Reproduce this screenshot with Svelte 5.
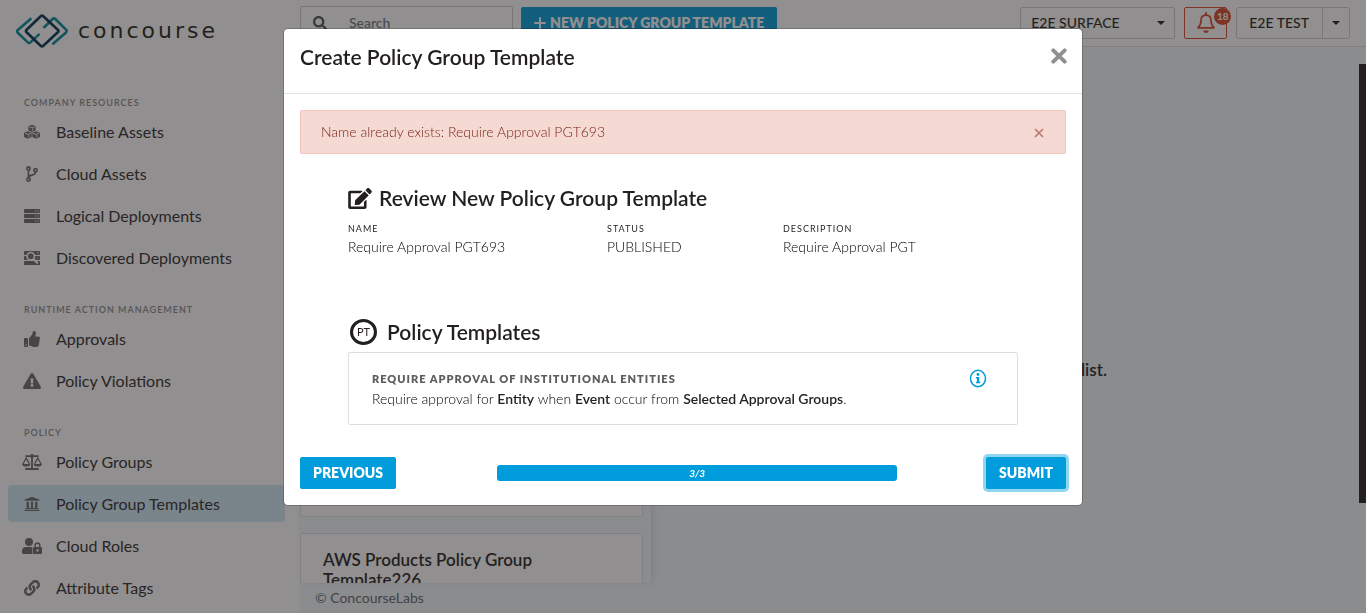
<script>
  const groups = [
    {
      title: 'Company Resources',
      items: [
        { label: 'Baseline Assets', icon: 'cubes' },
        { label: 'Cloud Assets', icon: 'branch' },
        { label: 'Logical Deployments', icon: 'server' },
        { label: 'Discovered Deployments', icon: 'discover' }
      ]
    },
    {
      title: 'Runtime Action Management',
      items: [
        { label: 'Approvals', icon: 'thumb' },
        { label: 'Policy Violations', icon: 'warning' }
      ]
    },
    {
      title: 'Policy',
      items: [
        { label: 'Policy Groups', icon: 'scale' },
        { label: 'Policy Group Templates', icon: 'bank', active: true },
        { label: 'Cloud Roles', icon: 'userlock' },
        { label: 'Attribute Tags', icon: 'link' }
      ]
    }
  ];

  const facts = [
    { name: 'Name', value: 'Require Approval PGT693' },
    { name: 'Status', value: 'PUBLISHED' },
    { name: 'Description', value: 'Require Approval PGT' }
  ];
</script>

{#snippet icon(name)}
  {#if name === 'cubes'}
    <svg class="icon" viewBox="0 0 16 16" aria-hidden="true">
      <g fill="currentColor">
        <path d="M8 .8 11.6 2.2V6.4L8 8 4.4 6.4V2.2Z" />
        <path d="M4 7.2 7.7 8.7V13L4 14.8 0 13V8.7Z" />
        <path d="M12 7.2 16 8.7V13L12 14.8 8.3 13V8.7Z" />
      </g>
      <g class="cut" fill="none" stroke-width="0.9">
        <path d="M5.2 2.7 8 3.8 10.8 2.7M8.8 4.4V6.8M1 9.3 4 10.4 7 9.3M4.8 11V13.5M9 9.3 12 10.4 15 9.3M12.8 11V13.5" />
      </g>
    </svg>
  {:else if name === 'branch'}
    <svg class="icon" viewBox="0 0 16 16" aria-hidden="true">
      <g fill="none" stroke="currentColor" stroke-width="1.7">
        <circle cx="4.5" cy="2.5" r="1.6" />
        <circle cx="4.5" cy="13.5" r="1.6" />
        <circle cx="11.5" cy="4.2" r="1.6" />
        <path d="M4.5 4.2V11.8M11.5 6C11.5 10.4 4.8 8 4.6 11.6" />
      </g>
    </svg>
  {:else if name === 'server'}
    <svg class="icon" viewBox="0 0 16 16" aria-hidden="true">
      <path fill="currentColor" fill-rule="evenodd" d="M.8 1H15.2Q16 1 16 1.8V4.2Q16 5 15.2 5H.8Q0 5 0 4.2V1.8Q0 1 .8 1ZM.8 6H15.2Q16 6 16 6.8V9.2Q16 10 15.2 10H.8Q0 10 0 9.2V6.8Q0 6 .8 6ZM.8 11H15.2Q16 11 16 11.8V14.2Q16 15 15.2 15H.8Q0 15 0 14.2V11.8Q0 11 .8 11ZM11 2.4V3.6H12.2V2.4ZM13.4 2.4V3.6H14.6V2.4ZM11 7.4V8.6H12.2V7.4ZM13.4 7.4V8.6H14.6V7.4ZM11 12.4V13.6H12.2V12.4ZM13.4 12.4V13.6H14.6V12.4Z" />
    </svg>
  {:else if name === 'discover'}
    <svg class="icon" viewBox="0 0 16 16" aria-hidden="true">
      <path fill="currentColor" fill-rule="evenodd" d="M.8 1H15.2Q16 1 16 1.8V4.2Q16 5 15.2 5H.8Q0 5 0 4.2V1.8Q0 1 .8 1ZM.8 6H15.2Q16 6 16 6.8V9.2Q16 10 15.2 10H.8Q0 10 0 9.2V6.8Q0 6 .8 6ZM.8 11H15.2Q16 11 16 11.8V14.2Q16 15 15.2 15H.8Q0 15 0 14.2V11.8Q0 11 .8 11ZM13.2 2.4V3.6H14.4V2.4ZM13.2 7.4V8.6H14.4V7.4Z" />
      <circle class="cut" cx="6.8" cy="6.2" r="3.7" fill="currentColor" stroke-width="1.7" />
      <path class="cut" d="M9.8 9.4 13.2 12.8" stroke-width="2.2" stroke-linecap="round" />
    </svg>
  {:else if name === 'thumb'}
    <svg class="icon" viewBox="0 0 512 512" aria-hidden="true">
      <path fill="currentColor" d="M104 224H24c-13.255 0-24 10.745-24 24v240c0 13.255 10.745 24 24 24h80c13.255 0 24-10.745 24-24V248c0-13.255-10.745-24-24-24zM64 472c-13.255 0-24-10.745-24-24s10.745-24 24-24 24 10.745 24 24-10.745 24-24 24zM384 81.452c0 42.416-25.97 66.208-33.277 94.548h101.723c33.397 0 59.397 27.746 59.553 58.098.084 17.938-7.546 37.249-19.439 49.197l-.11.11c9.836 23.337 8.237 56.037-9.308 79.469 8.681 25.895-.069 57.704-16.382 74.757 4.298 17.598 2.244 32.575-6.148 44.632C440.202 511.587 389.616 512 346.839 512l-2.845-.001c-48.287-.017-87.806-17.598-119.56-31.725-15.957-7.099-36.821-15.887-52.651-16.178-6.54-.12-11.783-5.457-11.783-11.998v-213.77c0-3.2 1.282-6.271 3.558-8.521 39.614-39.144 56.648-80.587 89.117-113.111 14.804-14.832 20.188-37.236 25.393-58.902C282.515 39.293 291.817 0 312 0c24 0 72 8 72 81.452z" />
    </svg>
  {:else if name === 'warning'}
    <svg class="icon wide" viewBox="0 0 576 512" aria-hidden="true">
      <path fill="currentColor" d="M569.517 440.013C587.975 472.007 564.806 512 527.94 512H48.054c-36.937 0-59.999-40.055-41.577-71.987L246.423 23.985c18.467-32.009 64.72-31.951 83.154 0l239.94 416.028zM288 354c-25.405 0-46 20.595-46 46s20.595 46 46 46 46-20.595 46-46-20.595-46-46-46zm-43.673-165.346l7.418 136c.347 6.364 5.609 11.346 11.982 11.346h48.546c6.373 0 11.635-4.982 11.982-11.346l7.418-136c.375-6.874-5.098-12.654-11.982-12.654h-63.383c-6.884 0-12.356 5.78-11.981 12.654z" />
    </svg>
  {:else if name === 'scale'}
    <svg class="icon wide" viewBox="0 0 20 16" aria-hidden="true">
      <g fill="none" stroke="currentColor">
        <path d="M10 1.2V15M3.4 2.1H16.6M3.2 15H16.8" stroke-width="1.8" />
        <path d="M.9 10 4.2 4 7.5 10M12.5 10 15.8 4 19.1 10" stroke-width="1.3" />
      </g>
      <circle cx="10" cy="2" r="1.9" fill="currentColor" />
      <path d="M0 10H8.4Q7.8 12.6 4.2 12.6T0 10ZM11.6 10H20Q19.4 12.6 15.8 12.6T11.6 10Z" fill="currentColor" />
    </svg>
  {:else if name === 'bank'}
    <svg class="icon" viewBox="0 0 16 16" aria-hidden="true">
      <path fill="currentColor" d="M8 .8 15.4 3.6V4.8H.6V3.6ZM2.6 5.8H4.9V12H2.6ZM6.9 5.8H9.1V12H6.9ZM11.1 5.8H13.4V12H11.1ZM1.6 12H14.4V13.1H1.6ZM.6 13.8H15.4V15.1H.6Z" />
    </svg>
  {:else if name === 'userlock'}
    <svg class="icon wide" viewBox="0 0 20 16" aria-hidden="true">
      <circle cx="7" cy="4" r="4" fill="currentColor" />
      <path fill="currentColor" d="M0 14.5V13Q0 9 4 9H9Q10 9 10.4 9.2V16H1.5Q0 16 0 14.5Z" />
      <path fill="currentColor" fill-rule="evenodd" d="M12 9H19Q20 9 20 10V15Q20 16 19 16H12Q11 16 11 15V10Q11 9 12 9ZM15.5 11.3A1.2 1.2 0 1 0 15.5 13.7 1.2 1.2 0 1 0 15.5 11.3Z" />
      <path d="M13.2 9.5V7.2Q13.2 4.9 15.5 4.9T17.8 7.2V9.5" fill="none" stroke="currentColor" stroke-width="1.5" />
    </svg>
  {:else if name === 'link'}
    <svg class="icon" viewBox="0 0 512 512" aria-hidden="true">
      <path fill="currentColor" d="M326.612 185.391c59.747 59.809 58.927 155.698.36 214.59-.11.12-.24.25-.36.37l-67.2 67.2c-59.27 59.27-155.699 59.262-214.96 0-59.27-59.26-59.27-155.7 0-214.96l37.106-37.106c9.84-9.84 26.786-3.3 27.294 10.606.648 17.722 3.826 35.527 9.69 52.721 1.986 5.822.567 12.262-3.783 16.612l-13.087 13.087c-28.026 28.026-28.905 73.66-1.155 101.96 28.024 28.579 74.086 28.749 102.325.51l67.2-67.19c28.191-28.191 28.073-73.757 0-101.83-3.701-3.694-7.429-6.564-10.341-8.569a16.037 16.037 0 0 1-6.947-12.606c-.396-10.567 3.348-21.456 11.698-29.806l21.054-21.055c5.521-5.521 14.182-6.199 20.584-1.731a152.482 152.482 0 0 1 20.522 17.196zM467.547 44.449c-59.261-59.262-155.69-59.27-214.96 0l-67.2 67.2c-.12.12-.25.25-.36.37-58.566 58.892-59.387 154.781.36 214.59a152.454 152.454 0 0 0 20.521 17.196c6.402 4.468 15.064 3.789 20.584-1.731l21.054-21.055c8.35-8.35 12.094-19.239 11.698-29.806a16.037 16.037 0 0 0-6.947-12.606c-2.912-2.005-6.64-4.875-10.341-8.569-28.073-28.073-28.191-73.639 0-101.83l67.2-67.19c28.239-28.239 74.3-28.069 102.325.51 27.75 28.3 26.872 73.934-1.155 101.96l-13.087 13.087c-4.35 4.35-5.769 10.79-3.783 16.612 5.864 17.194 9.042 34.999 9.69 52.721.509 13.906 17.454 20.446 27.294 10.606l37.106-37.106c59.271-59.259 59.271-155.699.001-214.959z" />
    </svg>
  {/if}
{/snippet}

<div class="app">
  <aside class="sidebar">
    <a class="brand" href="#home">
      <svg class="mark" viewBox="0 0 52 34" aria-hidden="true">
        <g fill="none" stroke-width="2.6" stroke-linecap="round" stroke-linejoin="round">
          <path stroke="#008b9b" d="M14.5 5 1.8 16Q.2 17.3 1.8 18.8L11.8 28.4Q13.1 29.6 14.4 28.4L22.8 20.6" />
          <path stroke="#008b9b" d="M28.2 13.2 36.6 5Q38 3.8 39.3 5L50 15.6Q51.2 17 50 18.4L37.3 29.6" />
          <path stroke="#003057" d="M24.7 2.2Q26 1 27.3 2.2L41.8 15.7Q43.2 17 41.8 18.3L27.3 31.8Q26 33 24.7 31.8L10.6 18.3Q9.2 17 10.6 15.7Z" />
        </g>
      </svg>
      <span>concourse</span>
    </a>
    <nav>
      {#each groups as group}
        <section>
          <h2>{group.title}</h2>
          <ul>
            {#each group.items as item}
              <li>
                <a href="#nav" class:active={item.active}>
                  <span class="slot">{@render icon(item.icon)}</span>{item.label}
                </a>
              </li>
            {/each}
          </ul>
        </section>
      {/each}
    </nav>
  </aside>

  <div class="page">
    <header class="topbar">
      <div class="search">
        <svg viewBox="0 0 512 512" aria-hidden="true">
          <path fill="currentColor" d="M505 442.7L405.3 343c-4.5-4.5-10.6-7-17-7H372c27.6-35.3 44-79.7 44-128C416 93.1 322.9 0 208 0S0 93.1 0 208s93.1 208 208 208c48.3 0 92.7-16.4 128-44v16.3c0 6.4 2.5 12.5 7 17l99.7 99.7c9.4 9.4 24.6 9.4 33.9 0l28.3-28.3c9.4-9.4 9.4-24.6.1-34zM208 336c-70.7 0-128-57.2-128-128 0-70.7 57.2-128 128-128 70.7 0 128 57.2 128 128 0 70.7-57.2 128-128 128z" />
        </svg>
        <input type="search" placeholder="Search" aria-label="Search" />
      </div>
      <button class="primary create" type="button">
        <svg viewBox="0 0 12 12" aria-hidden="true">
          <path d="M6 1V11M1 6H11" stroke="currentColor" stroke-width="2" stroke-linecap="round" />
        </svg>
        NEW POLICY GROUP TEMPLATE
      </button>
      <div class="account">
        <div class="surface">
          <select aria-label="Surface"><option>E2E SURFACE</option></select>
          <i class="caret"></i>
        </div>
        <button class="bell" type="button" aria-label="Notifications">
          <svg viewBox="0 0 20 22" aria-hidden="true">
            <path d="M10 3.2C6.6 3.2 5 5.8 5 8.6 5 12.6 3.6 14.2 2 15.8H18C16.4 14.2 15 12.6 15 8.6 15 5.8 13.4 3.2 10 3.2Z" fill="none" stroke="currentColor" stroke-width="1.7" stroke-linejoin="round" />
            <path d="M10 1V3" stroke="currentColor" stroke-width="2" stroke-linecap="round" />
            <path d="M7.2 18.4H12.8Q12.4 21 10 21T7.2 18.4Z" fill="currentColor" />
          </svg>
          <span class="badge">18</span>
        </button>
        <div class="user">
          <button type="button">E2E TEST</button>
          <button type="button" class="toggle" aria-label="Account menu"><i class="caret"></i></button>
        </div>
      </div>
    </header>

    <main>
      <div class="list">
        <div class="card first"></div>
        <article class="card"><h3>AWS Products Policy Group Template226</h3></article>
      </div>
      <div class="detail">
        <p>list.</p>
        <span class="thumb"></span>
      </div>
    </main>
    <footer class="copyright">© ConcourseLabs</footer>
  </div>
</div>

<div class="backdrop">
  <div class="dialog" role="dialog" aria-modal="true" aria-labelledby="dialog-title">
    <header>
      <h1 id="dialog-title">Create Policy Group Template</h1>
      <button class="close" type="button" aria-label="Close">
        <svg viewBox="0 0 14 14" aria-hidden="true">
          <path d="M2 2 12 12M12 2 2 12" stroke="currentColor" stroke-width="3.4" stroke-linecap="round" />
        </svg>
      </button>
    </header>
    <div class="body">
      <div class="alert" role="alert">
        <span>Name already exists: Require Approval PGT693</span>
        <button type="button" aria-label="Dismiss">
          <svg viewBox="0 0 10 10" aria-hidden="true">
            <path d="M1 1 9 9M9 1 1 9" stroke="currentColor" stroke-width="1.7" />
          </svg>
        </button>
      </div>

      <div class="review">
        <h2>
          <svg class="edit" viewBox="0 0 576 512" aria-hidden="true">
            <path fill="currentColor" d="M402.6 83.2l90.2 90.2c3.8 3.8 3.8 10 0 13.8L274.4 405.6l-92.8 10.3c-12.4 1.4-22.9-9.1-21.5-21.5l10.3-92.8L388.8 83.2c3.8-3.8 10-3.8 13.8 0zm162-22.9l-48.8-48.8c-15.2-15.2-39.9-15.2-55.2 0l-35.4 35.4c-3.8 3.8-3.8 10 0 13.8l90.2 90.2c3.8 3.8 10 3.8 13.8 0l35.4-35.4c15.2-15.3 15.2-40 0-55.2zM384 346.2V448H64V128h229.8c3.2 0 6.2-1.3 8.5-3.5l40-40c7.6-7.6 2.2-20.5-8.5-20.5H48C21.5 64 0 85.5 0 112v352c0 26.5 21.5 48 48 48h352c26.5 0 48-21.5 48-48V306.2c0-10.7-12.9-16-20.5-8.5l-40 40c-2.2 2.3-3.5 5.3-3.5 8.5z" />
          </svg>
          Review New Policy Group Template
        </h2>
        <dl>
          {#each facts as fact}
            <div>
              <dt>{fact.name}</dt>
              <dd>{fact.value}</dd>
            </div>
          {/each}
        </dl>

        <h2><span class="pt">PT</span>Policy Templates</h2>
        <article class="template">
          <div>
            <h3>Require Approval of Institutional Entities</h3>
            <p>
              Require approval for <b>Entity</b> when <b>Event</b> occur from <b>Selected Approval Groups</b>.
            </p>
          </div>
          <button type="button" aria-label="Details">
            <svg viewBox="0 0 18 20" aria-hidden="true">
              <ellipse cx="9" cy="10" rx="7.9" ry="8.6" fill="none" stroke="currentColor" stroke-width="1.6" />
              <circle cx="9" cy="5.8" r="1.5" fill="currentColor" />
              <path d="M6.8 8.4H10.3V13.4H11.4V14.9H6.8V13.4H7.9V9.9H6.8Z" fill="currentColor" />
            </svg>
          </button>
        </article>
      </div>
    </div>
    <footer>
      <button class="primary" type="button">PREVIOUS</button>
      <div class="progress" role="progressbar" aria-valuenow="3" aria-valuemin="0" aria-valuemax="3" aria-label="Step">3/3</div>
      <button class="primary focused" type="button">SUBMIT</button>
    </footer>
  </div>
</div>

<style>
  :global(body) {
    font-family: Lato, sans-serif;
    font-size: 14px;
    color: #231f20;
  }
  * { box-sizing: border-box; }
  h1, h2, h3, p, ul, dl, dd { margin: 0; padding: 0; }
  h1, h2 { font-size: 21px; line-height: 24px; font-weight: 600; }
  button { font: inherit; color: inherit; cursor: pointer; }
  a { color: inherit; text-decoration: none; }
  svg { display: block; flex: none; }

  .app { display: flex; height: 100vh; overflow: hidden; background: #fff; }

  .sidebar { flex: 0 0 300px; padding: 13px 15px 0 8px; }
  .brand { display: flex; align-items: center; gap: 10px; height: 36px; padding-left: 8px; margin-bottom: 44px; font: 22px "DejaVu Sans", sans-serif; letter-spacing: 3px; }
  .brand span { padding-bottom: 2px; }
  .mark { width: 52px; height: 36px; }
  section { margin-bottom: 24px; }
  section h2 { padding-left: 16px; font-size: 9px; line-height: 20px; font-weight: 600; letter-spacing: 1px; text-transform: uppercase; color: #8b898a; }
  ul { display: grid; gap: 5px; list-style: none; }
  li a { display: flex; align-items: center; height: 37px; border-radius: 4px; padding-left: 14px; font-size: 16px; color: #2e2a2b; --cut: #fff; }
  li a.active { background: #cfeaf7; }
  .slot { display: flex; justify-content: center; width: 20px; margin-right: 14px; color: #6b696a; }
  .icon { width: 16px; height: 16px; }
  .icon.wide { width: 20px; }
  .cut { stroke: var(--cut); }

  .page { flex: 1; min-width: 0; display: flex; flex-direction: column; background: #f3f9fc; }
  .topbar { display: flex; align-items: flex-start; height: 47px; padding: 6px 16px 0 0; background: #fff; border-bottom: 1px solid #dedede; }
  .search { display: flex; align-items: center; width: 213px; height: 34px; margin-right: 8px; padding-left: 12px; border: 1px solid #ccc; border-radius: 2px; }
  .search svg { width: 14px; height: 14px; color: #495057; }
  .search input { flex: 1; min-width: 0; padding: 0 0 2px 22px; border: 0; background: none; font: inherit; font-weight: 500; outline: 0; }
  .search input::placeholder { color: #6c757d; }

  .primary { height: 32px; padding: 0 13px 1px; border: 0; border-radius: 2px; background: #009cdb; color: #fff; font-weight: 800; }
  .create { display: flex; align-items: center; gap: 4px; margin-top: 1px; }
  .create svg { width: 12px; height: 12px; }

  .account { display: flex; gap: 9px; height: 32px; margin: 1px 0 0 auto; font-weight: 500; }
  .surface { display: flex; align-items: center; width: 155px; border: 1px solid #ccc; border-radius: 2px; padding-right: 9px; }
  .surface select { flex: 1; appearance: none; border: 0; background: none; padding: 0 0 1px 10px; font: inherit; color: inherit; }
  .caret { border: 4px solid transparent; border-top-color: currentColor; border-bottom: 0; }
  .bell { position: relative; width: 43px; padding: 0 0 0 11px; border: 1px solid #d9482b; border-radius: 2px; background: none; color: #d9482b; }
  .bell svg { width: 20px; height: 22px; }
  .badge { position: absolute; top: 0; right: -5px; width: 17px; height: 17px; border-radius: 50%; background: #d9482b; color: #fff; font-size: 10px; line-height: 17px; font-weight: 700; }
  .user { display: flex; border: 1px solid #ccc; border-radius: 3px; }
  .user button { border: 0; background: none; padding: 0 13px 1px 12px; }
  .user .toggle { display: flex; align-items: center; width: 27px; padding: 0 9px; border-left: 1px solid #ccc; }

  main { flex: 1; min-height: 0; display: flex; }
  .list { flex: 0 0 351px; display: flex; flex-direction: column; gap: 16px; padding: 17px 8px 0 0; overflow: hidden; box-shadow: 2px 0 6px rgba(35, 31, 32, 0.12); }
  .card { margin-bottom: -24px; padding: 16px 22px; border: 1px solid #dbe3e7; border-radius: 2px; background: #fff; }
  .card.first { flex: 1; margin: 0; }
  .card h3 { max-width: 240px; font-size: 17px; line-height: 20px; font-weight: 600; }
  .detail { position: relative; flex: 1; padding: 311px 0 0 430px; font-size: 17px; line-height: 24px; font-weight: 600; }
  .thumb { position: absolute; top: 17px; right: 0; bottom: 80px; width: 7px; background: #231f20; }
  .copyright { height: 30px; padding-left: 15px; line-height: 30px; color: #5b6670; }

  .backdrop { position: fixed; inset: 0; padding: 28px 16px; background: rgba(35, 31, 32, 0.5); }
  .dialog { max-width: 800px; margin: 0 auto; border: 1px solid rgba(0, 0, 0, 0.2); border-radius: 5px; background: #fff; background-clip: padding-box; }
  .dialog > header { display: flex; justify-content: space-between; align-items: flex-start; height: 65px; padding: 16px 15px 16px 16px; border-bottom: 1px solid #dee2e6; }
  .close { padding: 3px 0 0; border: 0; background: none; color: #918f90; }
  .close svg { width: 16px; height: 16px; }
  .body { padding: 16px 16px 0; }
  .alert { display: flex; align-items: center; justify-content: space-between; height: 44px; padding: 0 20px; border: 1px solid #f2c5be; border-radius: 2px; background: #f5d9d3; color: #7b2415; font-weight: 300; }
  .alert span { padding-bottom: 2px; }
  .alert button { padding: 2px 1px 0; border: 0; background: none; color: #b97a70; }
  .alert svg { width: 10px; height: 10px; }

  .review { padding: 31px 48px 0; }
  .review h2 { display: flex; align-items: center; height: 26px; }
  .edit { width: 24px; height: 21px; margin-right: 7px; }
  dl { display: grid; grid-template-columns: 259px 176px 1fr; padding-top: 8px; margin-bottom: 64px; }
  dt { font-size: 9px; line-height: 20px; letter-spacing: 1px; text-transform: uppercase; }
  dd { line-height: 16px; font-weight: 300; color: #000; }
  .pt { width: 27px; height: 26px; margin: 0 10px 0 2px; border: 3px solid #231f20; border-radius: 50%; font-size: 11px; line-height: 20px; font-weight: 400; text-align: center; }
  .template { display: flex; justify-content: space-between; align-items: flex-start; margin-top: 7px; padding: 16px 30px 15px 23px; border: 1px solid #dedede; border-radius: 2px; }
  .template h3 { font-size: 11px; line-height: 20px; font-weight: 800; letter-spacing: 1px; text-transform: uppercase; color: #5f5c5d; }
  .template p { line-height: 20px; font-weight: 300; color: #000; }
  .template b { font-weight: 600; color: #231f20; }
  .template button { padding: 0; border: 0; background: none; color: #009cdb; }
  .template svg { width: 18px; height: 19px; }

  .dialog > footer { display: flex; align-items: center; justify-content: space-between; padding: 32px 16px 16px; }
  .progress { flex: 0 1 400px; height: 16px; margin-left: 12px; border-radius: 3px; background: #009cdb; color: #fff; font-size: 10px; line-height: 16px; font-weight: 700; font-style: italic; text-align: center; }
  .focused { box-shadow: 0 0 0 3px #8fd6f1; }
</style>
